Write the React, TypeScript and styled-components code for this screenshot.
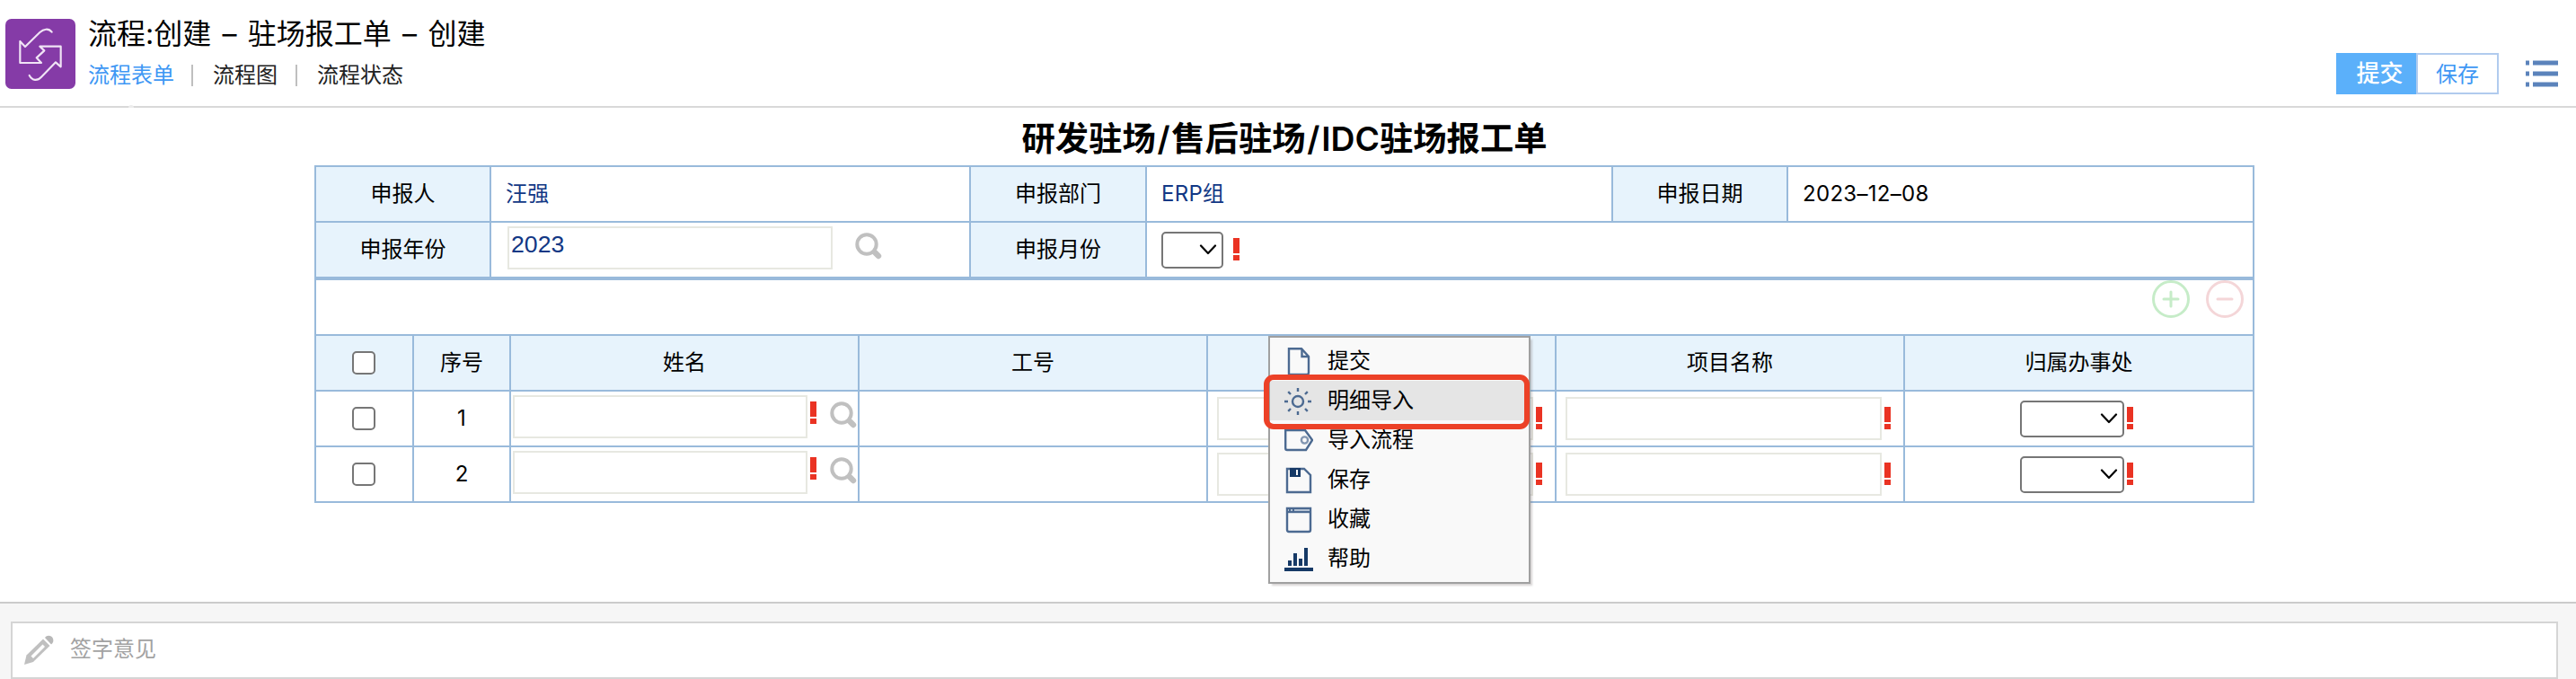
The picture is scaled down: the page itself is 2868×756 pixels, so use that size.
import React, { useState } from 'react'
import styled, { createGlobalStyle } from 'styled-components'

const LINE = '#99badb'
const HEAD_BG = '#e7f3fc'

const TABS = ['流程表单', '流程图', '流程状态']

const MENU = [
  { key: 'submit', text: '提交' },
  { key: 'detail', text: '明细导入' },
  { key: 'import', text: '导入流程' },
  { key: 'save', text: '保存' },
  { key: 'favorite', text: '收藏' },
  { key: 'help', text: '帮助' },
]

const ROWS = [1, 2]

const Logo = () => (
  <svg width="78" height="78" viewBox="0 0 234 234">
    <rect width="234" height="234" rx="20" fill="#853ba7" />
    <path
      d="M155 44C144 30 127 34 115 45L66 93L49 75V147H120L104 130L130 106L115 92H185V160L168 145L120 194C107 208 90 207 80 189"
      fill="none"
      stroke="#f0e4f5"
      strokeWidth="6.5"
      strokeLinejoin="round"
      strokeLinecap="round"
    />
  </svg>
)

const Search = () => (
  <svg width="30" height="30" viewBox="0 0 30 30" fill="none" stroke="#c0c0c0">
    <ellipse cx="13" cy="13" rx="10.7" ry="10.7" strokeWidth="4" />
    <path d="M20.5 20.5L22 22" strokeWidth="4" />
    <path d="M22.5 22.5L26 26" strokeWidth="6.4" strokeLinecap="round" />
  </svg>
)

const Required = () => (
  <svg width="7" height="26" viewBox="0 0 7 26" fill="#ea3323">
    <rect width="7" height="17" />
    <rect y="19" width="7" height="6" />
  </svg>
)

const Chevron = () => (
  <svg width="20" height="12" viewBox="0 0 20 12" fill="none" stroke="#000" strokeWidth="2.2">
    <path d="M2 1.5L10 10L18 1.5" strokeLinecap="round" strokeLinejoin="round" />
  </svg>
)

const Circle = ({ plus }: { plus?: boolean }) => (
  <svg width="42" height="42" viewBox="0 0 42 42" fill="none" stroke={plus ? '#c6ecc8' : '#f4d6d8'} strokeWidth="3">
    <circle cx="21" cy="21" r="19.5" />
    <path d={plus ? 'M13 21H29M21 13V29' : 'M13 21H29'} strokeLinecap="round" />
  </svg>
)

const ListIcon = () => (
  <svg width="36" height="30" viewBox="0 0 36 30" fill="#5b83bb">
    {[0.5, 12.5, 24.5].map(y => (
      <g key={y}>
        <rect y={y} width="4" height="5" />
        <rect x="8" y={y} width="28" height="5" />
      </g>
    ))}
  </svg>
)

const Pencil = () => (
  <svg width="36" height="36" viewBox="0 0 36 36">
    <path d="M2 34L4.5 23.5L23 5.5L30.5 13L12 31Z" fill="#c0c0c0" />
    <path d="M9.5 24.5L22.5 11.5L25 14L12 27Z" fill="#fff" />
    <path d="M25 4C27.5 0.5 32.5 1.5 34 5C35 8 34 10 32 11.5Z" fill="#b8b8b8" />
  </svg>
)

const MenuIcon = ({ name }: { name: string }) => {
  const line = { fill: 'none', stroke: '#4c6a91', strokeWidth: 2.4 }
  return (
    <svg width="32" height="32" viewBox="0 0 32 32">
      {name === 'submit' && (
        <g {...line}>
          <path d="M5 2.2H19L27 11V29Q27 31 25 31H5Z" />
          <path d="M19.5 2.5V11H27" />
        </g>
      )}
      {name === 'detail' && (
        <g {...line}>
          <circle cx="15" cy="17" r="6" />
          <path d="M15 2V6M15 28V32M0 17H4M26 17H30M4.2 6.2L7 9M23 25L25.8 27.8M25.8 6.2L23 9M7 25L4.2 27.8" />
        </g>
      )}
      {name === 'import' && (
        <g {...line}>
          <path d="M1.2 5H23L31 16L24 27H3Q1.2 27 1.2 25Z" />
          <circle cx="22.5" cy="16" r="3.6" stroke="#8296b1" />
        </g>
      )}
      {name === 'save' && (
        <g {...line}>
          <path d="M3 4H22L29 11V30H3Z" />
          <path d="M6 3H18V13H6Z" fill="#163966" stroke="none" />
          <path d="M14 5V11" stroke="#f9f9f9" strokeWidth="2" />
        </g>
      )}
      {name === 'favorite' && (
        <g {...line}>
          <path d="M3 4H29V28Q29 30 27 30H5Q3 30 3 28Z" />
          <path d="M3 8H29" />
          <path d="M4 6H28" stroke="#b4c1d2" strokeWidth="2" />
          <path d="M5 6H7M9 6H11" />
        </g>
      )}
      {name === 'help' && (
        <g fill="#163966">
          <rect x="4" y="18" width="4" height="6" />
          <rect x="10" y="10" width="4" height="14" />
          <rect x="16" y="16" width="4" height="8" />
          <rect x="22" y="4" width="4" height="20" />
          <rect y="26" width="32" height="4" />
        </g>
      )}
    </svg>
  )
}

const App: React.FC = () => {
  const [opinion, setOpinion] = useState('')
  return (
    <Page>
      <GlobalStyle />
      <Header>
        <Logo />
        <HeaderText>
          <Title>流程:创建 – 驻场报工单 – 创建</Title>
          <Tabs>
            {TABS.map((t, i) => (
              <Tab key={t} $active={i === 0}>{t}</Tab>
            ))}
          </Tabs>
        </HeaderText>
        <Notch />
        <Actions>
          <Button $primary>提交</Button>
          <Button>保存</Button>
          <ListIcon />
        </Actions>
      </Header>

      <Body>
        <FormTitle>
          研发驻场<Slash>/</Slash>售后驻场<Slash>/</Slash>IDC驻场报工单
        </FormTitle>
        <MainGrid>
          <Label>申报人</Label>
          <Value $blue>汪强</Value>
          <Label>申报部门</Label>
          <Value $blue>ERP组</Value>
          <Label>申报日期</Label>
          <Value>2023–12–08</Value>
          <Label>申报年份</Label>
          <Value>
            <YearInput>2023</YearInput>
            <YearSearch><Search /></YearSearch>
          </Value>
          <Label>申报月份</Label>
          <Value $span={3}>
            <Select $width={69}><Chevron /></Select>
            <MonthMark><Required /></MonthMark>
          </Value>
        </MainGrid>

        <DetailGrid>
          <DetailTools>
            <Circle plus />
            <Circle />
          </DetailTools>
          <Label><Check /></Label>
          <Label>序号</Label>
          <Label>姓名</Label>
          <Label>工号</Label>
          <Label />
          <Label>项目名称</Label>
          <Label>归属办事处</Label>
          {ROWS.map(n => (
            <React.Fragment key={n}>
              <Cell><Check /></Cell>
              <Cell>{n}</Cell>
              <NameCell>
                <Field $width={328} />
                <Required />
                <NameSearch><Search /></NameSearch>
              </NameCell>
              <Cell />
              <FieldCell>
                <Field $width={352} />
                <Required />
              </FieldCell>
              <FieldCell>
                <Field $width={352} />
                <Required />
              </FieldCell>
              <OfficeCell>
                <Select $width={116}><Chevron /></Select>
                <Required />
              </OfficeCell>
            </React.Fragment>
          ))}
        </DetailGrid>
      </Body>

      <Footer>
        <SignBox>
          <Pencil />
          <SignInput placeholder="签字意见" value={opinion} onChange={e => setOpinion(e.target.value)} />
        </SignBox>
      </Footer>

      <ContextMenu>
        {MENU.map(m => (
          <MenuItem key={m.key} $active={m.key === 'detail'}>
            <MenuIcon name={m.key} />
            {m.text}
          </MenuItem>
        ))}
        <Highlight />
      </ContextMenu>
    </Page>
  )
}

const GlobalStyle = createGlobalStyle`
* {
  box-sizing: border-box;
}
body {
  margin: 0;
  background: #fff;
  color: #000;
  font-family: Inter, "Noto Sans CJK SC", sans-serif;
  font-size: 24px;
}
svg {
  display: block;
  flex: none;
}
`

const Page = styled.div`
position: relative;
display: flex;
flex-direction: column;
width: 100%;
height: 756px;
overflow: hidden;
`

const Header = styled.div`
position: relative;
display: flex;
flex: none;
height: 120px;
padding: 21px 20px 0 6px;
border-bottom: 2px solid #d9d9d9;
`
const HeaderText = styled.div`
flex: 1;
margin-left: 14px;
`
const Title = styled.div`
height: 34px;
font-size: 32px;
line-height: 34px;
word-spacing: 3.3px;
white-space: nowrap;
`
const Tabs = styled.div`
display: flex;
margin-top: 14px;
`
const Tab = styled.div<{ $active?: boolean }>`
display: flex;
height: 30px;
line-height: 30px;
color: ${p => (p.$active ? '#3e97f4' : '#222')};
&:not(:first-child)::before {
  content: '';
  width: 2px;
  height: 24px;
  margin: 3px 22px 0 20px;
  background: #bfbfbf;
}
&:nth-child(2)::before {
  margin-left: 19px;
}
`
// small pointer of the active tab that cuts the header line
const Notch = styled.div`
position: absolute;
left: 143px;
bottom: -2px;
width: 6px;
height: 3px;
border-radius: 3px 3px 0 0;
background: #ececec;
`
const Actions = styled.div`
display: flex;
height: 46px;
margin-top: 38px;
svg {
  margin: 8px 0 0 30px;
}
`
const Button = styled.div<{ $primary?: boolean }>`
width: ${p => (p.$primary ? 89 : 92)}px;
height: 46px;
border: ${p => (p.$primary ? 'none' : '2px solid #b1cbee')};
background: ${p => (p.$primary ? '#5bb0fa' : '#fff')};
color: ${p => (p.$primary ? '#fff' : '#3e97f4')};
font-size: ${p => (p.$primary ? 26 : 24)}px;
font-weight: ${p => (p.$primary ? 500 : 400)};
line-height: ${p => (p.$primary ? 46 : 44)}px;
text-align: center;
padding-left: ${p => (p.$primary ? 8 : 0)}px;
`

const Body = styled.div`
flex: 1;
display: flex;
flex-direction: column;
align-items: center;
padding-right: 8px;
`
const FormTitle = styled.div`
height: 64px;
font-size: 37.33px;
font-weight: 600;
line-height: 69px;
white-space: nowrap;
`
const Slash = styled.span`
padding: 0 1.7px;
`
const Grid = styled.div`
display: grid;
grid-auto-rows: 62px;
width: 2160px;
border-top: 2px solid ${LINE};
border-left: 2px solid ${LINE};
`
const MainGrid = styled(Grid)`
grid-template-columns: 195px 534px 196px 519px 195px 519px;
`
const DetailGrid = styled(Grid)`
grid-template-columns: 109px 108px 388px 388px 388px 388px 389px;
`
const Cell = styled.div`
display: flex;
align-items: center;
justify-content: center;
border-right: 2px solid ${LINE};
border-bottom: 2px solid ${LINE};
line-height: 30px;
`
const Label = styled(Cell)`
background: ${HEAD_BG};
`
const Value = styled(Cell)<{ $blue?: boolean; $span?: number }>`
grid-column: span ${p => p.$span || 1};
justify-content: flex-start;
padding-left: 16px;
color: ${p => (p.$blue ? '#123885' : '#000')};
letter-spacing: 0.3px;
`
const DetailTools = styled(Cell)`
grid-column: 1 / -1;
align-items: flex-start;
justify-content: flex-end;
gap: 18px;
padding-right: 10px;
`
const NameCell = styled(Cell)`
align-items: flex-start;
justify-content: flex-start;
padding: 4px 0 0 2px;
& > svg {
  margin: 7px 0 0 3px;
}
`
const FieldCell = styled(Cell)`
justify-content: flex-start;
padding-left: 10px;
& > svg {
  margin: 0 0 0 3px;
}
`
const OfficeCell = styled(Cell)`
padding-right: 5px;
& > svg {
  margin-left: 3px;
}
`
const NameSearch = styled.div`
margin: 7px 0 0 15px;
`

const Field = styled.div<{ $width: number }>`
width: ${p => p.$width}px;
height: 48px;
border: 2px solid #e7e8e1;
background: #fff;
`
const YearInput = styled(Field).attrs({ $width: 362 })`
margin: -4px 0 0 2px;
padding-left: 2px;
color: #123885;
font-family: "Liberation Sans", sans-serif;
font-size: 26.67px;
letter-spacing: 0;
line-height: 37px;
`
const YearSearch = styled.div`
margin: -8px 0 0 25px;
`
const MonthMark = styled.div`
margin-left: 11px;
`
const Select = styled.div<{ $width: number }>`
display: flex;
align-items: center;
justify-content: flex-end;
width: ${p => p.$width}px;
height: 41px;
padding-right: 5px;
border: 2px solid #767676;
border-radius: 5px;
background: #fff;
`
const Check = styled.div`
width: 26px;
height: 26px;
margin-right: 1px;
border: 2px solid #767676;
border-radius: 5px;
background: #fff;
`

const Footer = styled.div`
flex: none;
height: 86px;
padding: 20px 20px 0 12px;
border-top: 2px solid #cbcbcb;
background: #f6f6f6;
`
const SignBox = styled.div`
display: flex;
align-items: center;
height: 64px;
padding-left: 11px;
border: 2px solid #d5d5d5;
background: #fff;
`
const SignInput = styled.input`
flex: 1;
height: 40px;
margin: 0 0 4px 17px;
padding: 0;
border: 0;
outline: 0;
background: transparent;
font: inherit;
&::placeholder {
  color: #a2a2a2;
}
`

const ContextMenu = styled.div`
position: absolute;
left: 1412px;
top: 374px;
width: 292px;
height: 276px;
padding: 4px 0;
border: 2px solid #a0a0a0;
background: #f9f9f9;
box-shadow: 3px 3px 2px -1px rgba(120, 110, 110, 0.3);
`
const MenuItem = styled.div<{ $active?: boolean }>`
display: flex;
align-items: center;
gap: 16px;
height: 44px;
padding-left: 16px;
background: ${p => (p.$active ? '#e5e5e5' : 'transparent')};
line-height: 44px;
`
// marker drawn round the hovered entry
const Highlight = styled.div`
position: absolute;
left: -7px;
top: 41px;
width: 296px;
height: 61px;
border: 6px solid #ec4127;
border-radius: 11px;
`

export default App
